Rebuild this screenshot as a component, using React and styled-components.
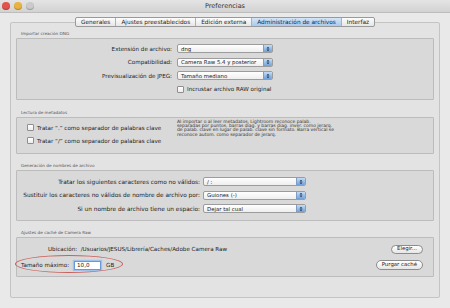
import React from 'react';
import styled, { createGlobalStyle } from 'styled-components';

const GlobalStyle = createGlobalStyle`
  html, body {
    margin: 0;
    padding: 0;
    background: #ececec;
  }
  body {
    font-family: "Lucida Grande", "DejaVu Sans", sans-serif;
    color: #222;
  }
`;

const Window = styled.div`
  width: 450px;
  height: 308px;
  display: flex;
  flex-direction: column;
  background: #e9e9e9;
  overflow: hidden;
`;

const TitleBar = styled.div`
  height: 13px;
  display: grid;
  grid-template-columns: 1fr auto 1fr;
  align-items: center;
  background: linear-gradient(#e4e4e4, #d2d2d2);
  border-bottom: 1px solid #bdbdbd;
  box-sizing: border-box;
`;

const Lights = styled.div`
  display: flex;
  gap: 4px;
  padding-left: 2px;
`;

const Light = styled.span`
  width: 8px;
  height: 8px;
  border-radius: 50%;
  background: ${(p) => p.color};
  box-shadow: inset 0 -1px 1px rgba(0, 0, 0, 0.25);
`;

const Title = styled.div`
  font-size: 6.5px;
  color: #333;
`;

const Body = styled.div`
  flex: 1;
  display: flex;
  flex-direction: column;
  padding: 4px 10px 10px;
`;

const TabBar = styled.div`
  align-self: center;
  display: flex;
  height: 10px;
  border: 1px solid #999;
  border-radius: 2px;
  background: linear-gradient(#fdfdfd, #e6e6e6);
  position: relative;
  z-index: 1;
  box-sizing: border-box;
`;

const Tab = styled.div`
  font-size: 5.8px;
  line-height: 8px;
  padding: 0 5px;
  color: ${(p) => (p.active ? '#0a2a55' : '#222')};
  background: ${(p) => (p.active ? 'linear-gradient(#d3e5f8, #a9c9ec)' : 'transparent')};
  & + & {
    border-left: 1px solid #b0b0b0;
  }
`;

const Pane = styled.div`
  flex: 1;
  margin-top: -5px;
  border: 1px solid #c4c4c4;
  border-radius: 2px;
  background: #e3e3e3;
  padding: 8px 5px 0;
  display: flex;
  flex-direction: column;
`;

const Group = styled.section`
  display: flex;
  flex-direction: column;
  margin-bottom: ${(p) => p.gap}px;
`;

const GroupTitle = styled.div`
  font-size: 4.2px;
  line-height: 6px;
  color: #555;
  padding-left: 5px;
  margin-bottom: 1px;
`;

const Box = styled.div`
  position: relative;
  background: #d9d9d9;
  border: 1px solid #bcbcbc;
  border-radius: 1px;
  height: ${(p) => p.h}px;
  box-sizing: border-box;
`;

const FormGrid = styled.div`
  display: grid;
  grid-template-columns: ${(p) => p.labelWidth}px auto;
  column-gap: ${(p) => p.colGap}px;
  row-gap: ${(p) => p.rowGap}px;
  grid-auto-rows: 9px;
  align-items: center;
  padding-top: ${(p) => p.top}px;
`;

const Label = styled.div`
  font-size: ${(p) => p.size || 5.6}px;
  text-align: right;
  white-space: nowrap;
  color: #222;
`;

const SelectBox = styled.div`
  width: ${(p) => p.w}px;
  height: 9px;
  box-sizing: border-box;
  border: 1px solid #9c9c9c;
  border-radius: 2px;
  background: linear-gradient(#ffffff, #eeeeee);
  display: flex;
  align-items: center;
  justify-content: space-between;
  overflow: hidden;
`;

const SelectText = styled.span`
  font-size: 5.4px;
  padding-left: 3px;
  white-space: nowrap;
`;

const Stepper = styled.span`
  width: 8px;
  height: 100%;
  background: linear-gradient(#c4dcf5, #6fa0db);
  border-left: 1px solid #7e9cc6;
  display: flex;
  align-items: center;
  justify-content: center;
`;

const CheckRow = styled.label`
  display: flex;
  align-items: center;
  gap: 3px;
  font-size: 5.6px;
  white-space: nowrap;
`;

const Check = styled.span`
  width: 5px;
  height: 5px;
  border: 1px solid #8e8e8e;
  border-radius: 1px;
  background: linear-gradient(#fff, #ececec);
  flex: none;
`;

const MetaRow = styled.div`
  display: flex;
  height: 100%;
`;

const CheckCol = styled.div`
  width: 160px;
  display: flex;
  flex-direction: column;
  gap: 6px;
  padding: 6px 0 0 10px;
  box-sizing: border-box;
`;

const Note = styled.p`
  margin: 0;
  padding-top: 2px;
  font-size: 4.5px;
  line-height: 4.2px;
  color: #333;
  white-space: pre;
`;

const CacheRows = styled.div`
  display: flex;
  flex-direction: column;
  padding: 6px 10px 0 0;
  gap: 6px;
`;

const CacheRow = styled.div`
  display: flex;
  align-items: center;
  height: 10px;
  padding-left: ${(p) => p.indent}px;
  gap: 3px;
  font-size: 5.6px;
  white-space: nowrap;
`;

const Spacer = styled.div`
  flex: 1;
`;

const PillButton = styled.button`
  font-family: inherit;
  font-size: 5.4px;
  height: ${(p) => p.h}px;
  padding: 0 5px;
  border: 1px solid #8c8c8c;
  border-radius: 5px;
  background: linear-gradient(#ffffff, #e6e6e6);
  color: #222;
  line-height: 1;
`;

const SizeInput = styled.div`
  width: 27px;
  height: 9px;
  box-sizing: border-box;
  border: 1px solid #6a9ad6;
  box-shadow: 0 0 1px 1px #9fc2ec;
  background: #fff;
  font-size: 5.6px;
  line-height: 7px;
  padding-left: 2px;
  margin: 0 2px;
`;

const Ellipse = styled.div`
  position: absolute;
  left: -2px;
  top: 17px;
  width: 108px;
  height: 18px;
  border: 1px solid #c8615c;
  border-radius: 50%;
  box-sizing: border-box;
`;

function Arrows() {
  return (
    <svg width="4" height="6" viewBox="0 0 4 6">
      <path d="M0.5 2.5 L2 0.8 L3.5 2.5 Z M0.5 3.5 L2 5.2 L3.5 3.5 Z" fill="#1d3450" />
    </svg>
  );
}

function Select({ w, children }) {
  return (
    <SelectBox w={w}>
      <SelectText>{children}</SelectText>
      <Stepper>
        <Arrows />
      </Stepper>
    </SelectBox>
  );
}

const tabs = [
  'Generales',
  'Ajustes preestablecidos',
  'Edición externa',
  'Administración de archivos',
  'Interfaz',
];

const note = `Al importar o al leer metadatos, Lightroom reconoce palab.
separadas por puntos, barras diag. y barras diag. inver. como jerarq.
de palab. clave en lugar de palab. clave sin formato. Barra vertical se
reconoce autom. como separador de jerarq.`;

export default function App() {
  return (
    <>
      <GlobalStyle />
      <Window>
        <TitleBar>
          <Lights>
            <Light color="#e2544d" />
            <Light color="#eab23f" />
            <Light color="#cbcbcb" />
          </Lights>
          <Title>Preferencias</Title>
          <div />
        </TitleBar>
        <Body>
          <TabBar>
            {tabs.map((t) => (
              <Tab key={t} active={t === 'Administración de archivos'}>
                {t}
              </Tab>
            ))}
          </TabBar>
          <Pane>
            <Group gap={10}>
              <GroupTitle>Importar creación DNG</GroupTitle>
              <Box h={62}>
                <FormGrid labelWidth={155} colGap={5} rowGap={4.5} top={5}>
                  <Label>Extensión de archivo:</Label>
                  <Select w={96}>dng</Select>
                  <Label>Compatibilidad:</Label>
                  <Select w={96}>Camera Raw 5.4 y posterior</Select>
                  <Label>Previsualización de JPEG:</Label>
                  <Select w={96}>Tamaño mediano</Select>
                  <div />
                  <CheckRow>
                    <Check />
                    Incrustar archivo RAW original
                  </CheckRow>
                </FormGrid>
              </Box>
            </Group>
            <Group gap={9}>
              <GroupTitle>Lectura de metadatos</GroupTitle>
              <Box h={37}>
                <MetaRow>
                  <CheckCol>
                    <CheckRow>
                      <Check />
                      Tratar “.” como separador de palabras clave
                    </CheckRow>
                    <CheckRow>
                      <Check />
                      Tratar “/” como separador de palabras clave
                    </CheckRow>
                  </CheckCol>
                  <Note>{note}</Note>
                </MetaRow>
              </Box>
            </Group>
            <Group gap={9}>
              <GroupTitle>Generación de nombres de archivo</GroupTitle>
              <Box h={51}>
                <FormGrid labelWidth={183} colGap={3} rowGap={4.5} top={6}>
                  <Label size={5.8}>Tratar los siguientes caracteres como no válidos:</Label>
                  <Select w={103}>/ :</Select>
                  <Label size={5.8}>Sustituir los caracteres no válidos de nombre de archivo por:</Label>
                  <Select w={103}>Guiones (-)</Select>
                  <Label size={5.8}>Si un nombre de archivo tiene un espacio:</Label>
                  <Select w={103}>Dejar tal cual</Select>
                </FormGrid>
              </Box>
            </Group>
            <Group gap={0}>
              <GroupTitle>Ajustes de caché de Camera Raw</GroupTitle>
              <Box h={40}>
                <CacheRows>
                  <CacheRow indent={31}>
                    Ubicación:&nbsp;&nbsp;/Usuarios/JESUS/Librería/Caches/Adobe Camera Raw
                    <Spacer />
                    <PillButton h={9}>Elegir...</PillButton>
                  </CacheRow>
                  <CacheRow indent={4}>
                    Tamaño máximo:
                    <SizeInput>10,0</SizeInput>
                    GB
                    <Spacer />
                    <PillButton h={10}>Purgar caché</PillButton>
                  </CacheRow>
                </CacheRows>
                <Ellipse />
              </Box>
            </Group>
          </Pane>
        </Body>
      </Window>
    </>
  );
}
